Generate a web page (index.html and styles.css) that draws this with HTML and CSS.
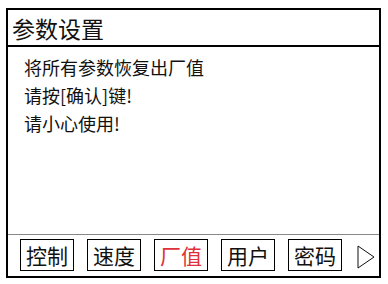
FILE: index.html
```html
<!DOCTYPE html>
<html lang="zh-CN">
<head>
  <meta charset="UTF-8">
  <title>参数设置</title>
  <link rel="stylesheet" href="styles.css">
</head>
<body>
  <div class="screen">
    <div class="title">参数设置</div>
    <div class="content">
      <p>将所有参数恢复出厂值</p>
      <p>请按[确认]键!</p>
      <p>请小心使用!</p>
    </div>
    <div class="menu">
      <span class="btn">控制</span>
      <span class="btn">速度</span>
      <span class="btn active">厂值</span>
      <span class="btn">用户</span>
      <span class="btn">密码</span>
      <svg class="next" width="18" height="24" viewBox="0 0 18 24">
        <path d="M1 1 L17 12 L1 23 Z" fill="none" stroke="#111" stroke-width="1"/>
      </svg>
    </div>
  </div>
</body>
</html>
```

FILE: styles.css
```css
body {
  margin: 0;
  background: #fff;
  font-family: "Noto Sans CJK SC", "DejaVu Sans", sans-serif;
  color: #111;
}

.screen {
  box-sizing: border-box;
  width: 375px;
  height: 270px;
  margin: 8px 0 0 6px;
  border: 2px solid #000;
  display: flex;
  flex-direction: column;
}

.title {
  height: 35px;
  border-bottom: 2px solid #000;
  padding-left: 4px;
  font-size: 23px;
  line-height: 36px;
}

.content {
  flex: 1;
  padding: 6px 0 0 16px;
  position: relative;
}

.content p {
  margin: 0;
  font-size: 18px;
  line-height: 28px;
}

.menu {
  height: 42px;
  border-top: 1px solid #888;
  display: flex;
  align-items: flex-start;
  padding: 4px 0 0 12px;
  box-sizing: border-box;
}

.btn {
  box-sizing: border-box;
  width: 54px;
  height: 32px;
  margin-right: 13px;
  border: 1px solid #000;
  font-size: 21px;
  line-height: 30px;
  text-align: center;
}

.btn.active {
  color: #e0303a;
}

.next {
  margin: 6px 0 0 2px;
}
```
